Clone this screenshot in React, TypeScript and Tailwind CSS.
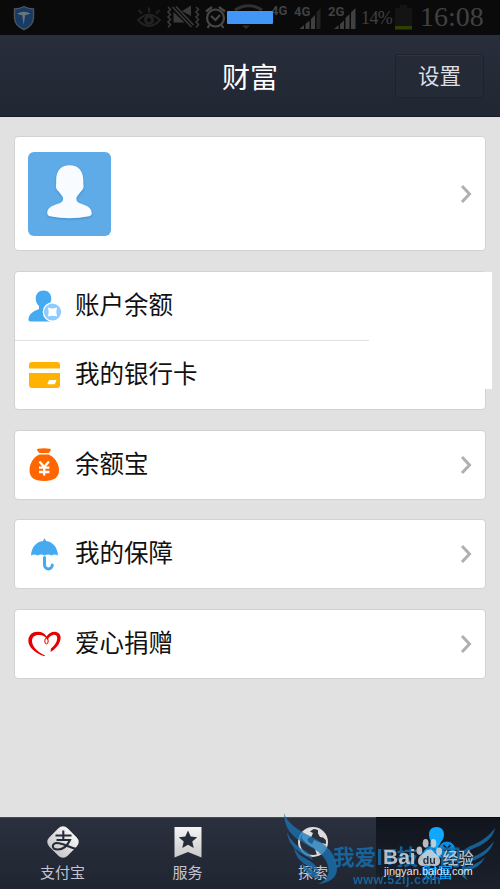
import React from 'react';

const CJK = "font-['Noto_Sans_CJK_SC',sans-serif]";

const Chevron = () => (
  <svg viewBox="0 0 12 20" className="w-3 h-5 shrink-0" fill="none" stroke="#b0b0b0" strokeWidth="3">
    <path d="M2 2 L9.5 10 L2 18" />
  </svg>
);

const BalanceIcon = () => (
  <svg viewBox="0 0 34 34" className="w-[34px] h-[34px]">
    <path d="M15.5 1.5c4.6 0 7.800 3.500 7.800 8 0 3.200-1.500 6-3.300 7.500v3c0 3 2 12.500 2 12.500H2.500C.8 32.500.2 31.500.5 30c.8-5.500 4.500-7.500 10.500-10v-3c-1.800-1.500-3.300-4.300-3.300-7.500 0-4.500 3.200-8 7.800-8z" fill="#46aaf0" />
    <circle cx="24.500" cy="23" r="9.200" fill="#8ecbff" stroke="#fff" strokeWidth="1.200" />
    <path d="M20 18.500q4.500 1.800 9 0q-1.400 4.500 0 9q-4.500-1.600-9 0q1.400-4.500 0-9z" fill="#fff" />
  </svg>
);

const CardIcon = () => (
  <svg viewBox="0 0 34 34" className="w-[34px] h-[34px]">
    <path d="M1 10.500V7a3 3 0 0 1 3-3h25a3 3 0 0 1 3 3v3.500z" fill="#ffb300" />
    <path d="M1 15h31v12a3 3 0 0 1-3 3H4a3 3 0 0 1-3-3z" fill="#ffb300" />
    <path d="M21 22h7.500l-1.700 4.200h-7.500z" fill="#fff" />
  </svg>
);

const MoneyBagIcon = () => (
  <svg viewBox="0 0 34 34" className="w-[34px] h-[34px]">
    <path d="M9.800.8Q16 -.5 22 .8q1.400.5.600 1.800L20.700 5h-9.400L9.300 2.600Q8.500 1.300 9.800.8z" fill="#ff6600" />
    <path d="M11.500 6.500h9C26 8.500 31 15.500 31 22c0 7-4.500 11-15 11S1.500 29 1.500 22c0-6.500 4.500-13.500 10-15.500z" fill="#ff6600" />
    <path d="M11.500 13.500l4.700 5.500 4.700-5.500M16.200 19v8.500M11 19.700h10.400M11 24h10.400" fill="none" stroke="#fff" strokeWidth="2.300" />
  </svg>
);

const UmbrellaIcon = () => (
  <svg viewBox="0 0 34 34" className="w-[34px] h-[34px]">
    <path d="M16.500 1l1.500 3c6.500.7 11.500 6 12 14.500q-3.300-2-6.500 0q-3.500-2-7 0q-3.500-2-7 0q-3.200-2-6.500 0C3.500 10 8.500 4.700 15 4z" fill="#46aaf0" />
    <path d="M16.500 20.500v7.500a3.900 3.900 0 0 0 7.800 0" fill="none" stroke="#46aaf0" strokeWidth="3" strokeLinecap="round" />
  </svg>
);

const HeartIcon = () => (
  <svg viewBox="0 0 34 34" className="w-[34px] h-[34px]">
    <path d="M16.700 29.300C8 26.500.300 20.500.300 13.700.300 8 4.500 4.700 9.500 4.700c4.500 0 7.500 1.500 9 4.800C20.500 6.500 24 4.500 27 4.700c3.500.3 6 2.800 5.600 6.800-.6 5.500-5 10.500-10 13.500l.3-3.500c3.500-2.700 6.500-7 6.300-10.500-.2-2.500-2-3.600-4-3-3 .8-5 2.800-5.500 5C17.500 9.300 14 8 10.500 8 6.500 8 4 10.300 4 14c0 5.500 6 11.500 13.100 14.500z" fill="#e60000" />
    <ellipse cx="18.500" cy="14" rx="1.700" ry="2.900" fill="none" stroke="#e60000" />
  </svg>
);

interface RowProps {
  icon: React.ReactNode;
  label: string;
  arrow?: boolean;
}

const Row = ({ icon, label, arrow }: RowProps) => (
  <div className="flex items-center h-[68px] pl-[13px] pr-[13px]">
    {icon}
    <span className="ml-[13px] flex-1 text-[24.500px] leading-8 text-[#111] relative -top-0.5">{label}</span>
    {arrow && <Chevron />}
  </div>
);

const CARD = 'bg-white border border-[#d2d2d2] rounded-[4px]';

const StatusBar = () => (
  <div className="h-[35px] bg-[#0a0a0a] relative text-[#414141]">
    <svg viewBox="0 0 500 35" className="w-[500px] h-[35px] block">
      <path d="M24 6.500q4.500 2.500 9.500 2.500v9q-.5 8-9.500 11.500q-9-3.500-9.500-11.500V9q5 0 9.500-2.500z" fill="#173b63" stroke="#4c555f" strokeWidth="1.400" />
      <path d="M17 13.500q7-3.500 13.500 0q-3.500 1.500-5.300 1.500L23.700 25l-1.500-10q-2.500 0-5.200-1.500z" fill="#69747d" />
      {/* smart-stay eye */}
      <g fill="none" stroke="#222" strokeWidth="2">
        <path d="M138 20q11-10.500 22 0q-11 12-22 0z" />
        <circle cx="149" cy="20" r="3.500" strokeWidth="3" />
        <path d="M149 7.500v5M138.500 10l3.500 3.500M159.500 10l-3.500 3.500" />
      </g>
      {/* vibrate, sound off */}
      <g stroke="#3a3a3a" fill="#3a3a3a">
        <path d="M168 7l2.500 2.500-2.500 2.500 2.500 2.500-2.500 2.500 2.500 2.500-2.500 2.500 2.500 2.500-2.500 3M196 7l2.500 2.500-2.500 2.500 2.500 2.500-2.500 2.500 2.500 2.500-2.500 2.500 2.500 2.500-2.500 3" fill="none" strokeWidth="1.600" />
        <path d="M173.500 12v10.500h11zM191 5.500v10.500l-9-5z" stroke="none" />
        <path d="M172.500 7l19 20M176 6.500l17.500 18.500" fill="none" strokeWidth="1.600" />
      </g>
      {/* alarm */}
      <g fill="none" stroke="#474747" strokeWidth="2.200">
        <circle cx="215.500" cy="18" r="8.500" />
        <path d="M211 16l4.500 4 4.500-5M206 11.500l6-4.500M219 7l6 4.500M209.500 25l-2 3M221.500 25l2 3" />
      </g>
      <path d="M235 10q14-8.500 27 0" fill="none" stroke="#303030" strokeWidth="3" />
      <path d="M242 25.500h8l-4 3.500z" fill="#303030" />
      {/* signal strength */}
      <path d="M299.500 29l4.500-4v4zM305.500 24l4-3.500V29h-4zM311 19l4-4V29h-4zM334 29l4.500-4v4zM340 24l4-3.500V29h-4zM345.500 18l4-4V29h-4zM351 12.500l4.500-4.500V29H351z" fill="#404040" />
      <path d="M316.500 12.500l4-4.500V29h-4z" fill="#232323" />
      <path d="M395 8h5V5h7v3h5v18h-17z" fill="#141414" />
      <path d="M395 26h17v3.500h-17z" fill="#2d4200" />
    </svg>
    <span className="absolute left-[271px] top-[4px] text-[13px] leading-[14px] font-bold font-[Roboto,sans-serif]">4G</span>
    <span className="absolute left-[294px] top-[5px] text-[13px] leading-[14px] font-bold font-[Roboto,sans-serif]">4G</span>
    <span className="absolute left-[328px] top-[5px] text-[13px] leading-[14px] font-bold font-[Roboto,sans-serif]">2G</span>
    <span className="absolute left-[361px] top-[8px] text-[18px] leading-5 tracking-[-.6px] font-['Liberation_Serif',serif]">14%</span>
    <span className="absolute left-[420px] top-[2px] text-[28px] leading-[30px] font-['Liberation_Serif',serif]">16:08</span>
    <div className="absolute left-[227px] top-[11px] w-[46px] h-[13px] rounded-[1px] bg-[#4296f5]" />
  </div>
);

const AlipayIcon = () => (
  <svg viewBox="0 0 34 34" className="w-[34px] h-[34px]">
    <rect x="4" y="4" width="26" height="26" rx="6.500" transform="rotate(45 17 17)" fill="url(#silver)" />
    <path d="M9.500 10.500h16M17.300 5.500v9.500M10.500 15h13.500c-2.500 5.500-6.500 9.500-12 9.500-7 0-6.500-6.500-1-6.500 6.500 0 12 5 21.500 6.500" fill="none" stroke="#252b38" strokeWidth="2.100" />
  </svg>
);

const ServiceIcon = () => (
  <svg viewBox="0 0 34 34" className="w-[34px] h-[34px]">
    <path d="M3.500 2h27v30.500L17 27 3.500 32.500z" fill="url(#silver)" />
    <path d="M17 5.500l2.700 6 6.500.7-4.900 4.400 1.400 6.400-5.700-3.300-5.700 3.300 1.400-6.400-4.900-4.400 6.500-.7z" fill="#252b38" />
  </svg>
);

const GlobeIcon = () => (
  <svg viewBox="0 0 34 34" className="w-[34px] h-[34px]">
    <circle cx="17" cy="17" r="14" fill="#292f3b" stroke="#dedede" strokeWidth="2" />
    <path d="M7 8q5-5.500 12-5l-5 3.500 3 1.500-1.500 3.500-4 2.500 1 3 5 3-2 2-5-3.500-5-5.500zM22 4.500q8 4 8.500 11l-3.500-3-3-.5-2-3.500zM18 15l7 3 5 1q-1.500 7-9 11l-2-6-4-3z" fill="#dedede" />
  </svg>
);

const WealthIcon = () => (
  <svg viewBox="0 0 34 34" className="w-[34px] h-[34px]">
    <path d="M15.500 2c4.800 0 7.500 3 7.500 7.500 0 4-2 6.500-3.500 8v3l2 12H3c-1.500 0-2-1-1.500-3 1-5 5-7 9.500-9v-3C9.500 16 8 13.500 8 9.500 8 5 10.700 2 15.500 2z" fill="#10a8ff" />
    <circle cx="26" cy="24.500" r="8.500" fill="#0b8ee0" stroke="#141924" />
    <path d="M22.500 20l3.500 4 3.500-4M26 24v6M22.500 25h7" fill="none" stroke="#141924" strokeWidth="1.500" />
  </svg>
);

const TABS = [
  { label: '支付宝', Icon: AlipayIcon },
  { label: '服务', Icon: ServiceIcon },
  { label: '探索', Icon: GlobeIcon },
  { label: '财富', Icon: WealthIcon, active: true },
];

const Watermarks = () => (
  <div className="absolute inset-0 pointer-events-none">
    <svg viewBox="280 805 220 84" className="absolute left-[280px] -top-3 w-[220px] h-[84px]" fill="#1876b8" opacity="0.750">
      <path d="M284 813c4 11 14 17 26 23 17 8 27 19 27 33 0 9-8 14-19 15 9-4 12-10 10-18-3-12-14-17-24-23-12-6-20-15-20-30z" />
      <path d="M287 832c3 8 9 13 15 17 6 3 9 6 11 11-9-6-24-10-26-28zM294 847c3 7 9 10 16 14 5 3 8 7 9 12-8-7-23-9-25-26zM302 863c4 5 9 6 13 9q4 3 5 7c-8-1-16-5-18-16z" />
      <path d="M495 828c-2 10-9 15-18 19-8 3-14 7-17 13 0-9 7-13 15-16 8-4 14-8 20-16z" />
      <path d="M494 841c-3 11-11 15-19 19-6 2-10 6-13 11-1-8 5-12 11-14 9-4 15-8 21-16zM485 857c-4 9-11 12-18 14-3 1-3 4 1 9-6-2-9-7-6-12 8-2 16-4 23-11z" />
    </svg>
    <span className="absolute left-[333px] top-[25px] text-[21.500px] leading-7 font-bold text-[#1473b5] opacity-80 whitespace-nowrap">我爱IT技术网</span>
    <span className="absolute left-[353px] top-[55px] text-[12.500px] leading-4 tracking-[.5px] font-bold text-[#1473b5] opacity-80 font-['Liberation_Sans',sans-serif]">www.52ij.com</span>
    <div className="absolute left-[383px] top-[26px] flex items-center h-7 text-[#d4d8db] opacity-85">
      <span className="text-[21px] leading-7 font-bold font-['Liberation_Sans',sans-serif]">Bai</span>
      <svg viewBox="0 0 28 30" className="w-[27px] h-[29px] relative -top-[5px]" fill="currentColor">
        <ellipse cx="3.500" cy="13" rx="3" ry="4.300" />
        <ellipse cx="10" cy="5.500" rx="3" ry="4.500" />
        <ellipse cx="18" cy="5.500" rx="3" ry="4.500" />
        <ellipse cx="24" cy="14" rx="3" ry="4.300" />
        <path d="M14 12c3 0 4 3 7 5 6 4 5 12-1 12-3 0-9-.5-12 0-7 .5-8-8-2-12 4-2 5-5 8-5z" />
        <text x="7" y="26.500" fontSize="11" fontWeight="700" fontFamily="Liberation Sans" fill="#28313c">du</text>
      </svg>
      <span className="text-[15.500px] leading-7 font-medium">经验</span>
    </div>
    <span className="absolute left-[384px] top-[46px] text-[11px] leading-4 text-[#e5e7e9] font-['Liberation_Sans',sans-serif]">jingyan.baidu.com</span>
  </div>
);

export default function App() {
  return (
    <div className={`w-[500px] h-[889px] flex flex-col overflow-hidden bg-[#e1e1e1] ${CJK}`}>
      <svg className="absolute w-0 h-0">
        <linearGradient id="silver" x1="0" y1="0" x2="0" y2="1">
          <stop offset="0" stopColor="#f5f5f5" />
          <stop offset="1" stopColor="#c8c8c8" />
        </linearGradient>
      </svg>
      <StatusBar />
      <header className="h-[82px] grid grid-cols-[1fr_auto_1fr] items-center bg-linear-to-b from-[#292e3c] to-[#212633] border-b border-[#181c25]">
        <span />
        <h1 className="text-[28px] leading-9 text-white">财富</h1>
        <button className="justify-self-end mr-4 w-[89px] h-11 pb-0.5 rounded-[3px] border border-[#1d222e] bg-[#252a37] text-[21.500px] leading-8 text-[#dedee2] shadow-[inset_0_1px_0_#303542]">
          设置
        </button>
      </header>

      <main className="flex-1 flex flex-col gap-5 px-[14px] pt-[19px]">
        <section className={`${CARD} h-[115px] flex items-center justify-between px-[13px]`}>
          <div className="w-[83px] h-[84px] rounded-md bg-[#5eabe7]">
            <svg viewBox="0 0 84 84" className="w-full h-full">
              <path d="M42 13c9 0 14 6 14 15v4c1 4-1 6-2 7-2 3-5 5-5 8 0 7 16 4 15.500 15q0 2-2.500 2.500-20 4-40 0-2.500-.5-2.500-2.500C19 51 35.500 54 35.500 47c0-3-3-5-5-8-1-1-3-3-2-7v-4C28.500 19 33 13 42 13z" fill="#f8fbff" className="drop-shadow-[0_1px_1px_#3b8cc9]" />
            </svg>
          </div>
          <Chevron />
        </section>

        <section className={`${CARD} h-[139px] relative`}>
          <Row icon={<BalanceIcon />} label="账户余额" />
          <div className="h-px w-[354px] bg-[#dfdfdf]" />
          <Row icon={<CardIcon />} label="我的银行卡" />
          {/* blank patch hanging over the right edge */}
          <div className="absolute left-[459px] top-0 w-[18px] h-[117px] bg-white" />
        </section>

        <section className={`${CARD} h-[70px]`}>
          <Row icon={<MoneyBagIcon />} label="余额宝" arrow />
        </section>
        <section className={`${CARD} h-[70px] -mt-px`}>
          <Row icon={<UmbrellaIcon />} label="我的保障" arrow />
        </section>
        <section className={`${CARD} h-[70px]`}>
          <Row icon={<HeartIcon />} label="爱心捐赠" arrow />
        </section>
      </main>

      <nav className="h-[72px] relative grid grid-cols-[125px_125px_126px_124px] bg-linear-to-b from-[#2b303e] to-[#202532]">
        {TABS.map(({ label, Icon, active }) => (
          <div
            key={label}
            className={`flex flex-col items-center pt-[7px] border-t ${
              active ? 'border-[#090c12] bg-linear-to-b from-[#11151e] to-[#1c202b] text-[#10a8ff]' : 'border-[#454954] text-[#c3c4d2]'
            }`}
          >
            <Icon />
            <span className="mt-[3px] text-[15px] leading-5">{label}</span>
          </div>
        ))}
        <Watermarks />
      </nav>
    </div>
  );
}
